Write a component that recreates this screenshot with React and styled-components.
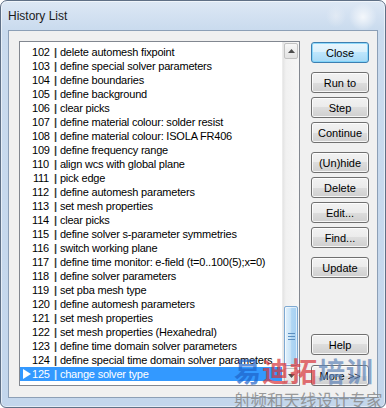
import React from "react";
import styled, { createGlobalStyle } from "styled-components";

const GlobalStyle = createGlobalStyle`
  html, body {
    margin: 0;
    padding: 0;
    background: #ffffff;
  }
  * {
    box-sizing: border-box;
  }
`;

const Window = styled.div`
  position: relative;
  width: 386px;
  height: 408px;
  border: 1px solid #5f7086;
  border-radius: 7px 7px 6px 6px;
  padding: 0 7px 9px 7px;
  display: flex;
  flex-direction: column;
  overflow: hidden;
  background:
    radial-gradient(circle at 362px 16px, rgba(255, 255, 255, 0.75) 0, rgba(255, 255, 255, 0) 14px),
    radial-gradient(ellipse at 335px 15px, rgba(235, 240, 246, 0.6) 0, rgba(235, 240, 246, 0) 10px),
    linear-gradient(#dde8f5 0, #cadbee 28px, #c3d6ec 100%);
  box-shadow: inset 0 0 0 1px rgba(255, 255, 255, 0.55);
`;

const TitleBar = styled.div`
  height: 29px;
  display: flex;
  align-items: center;
  font-family: "Liberation Sans", Arial, sans-serif;
  font-size: 12px;
  color: #1b1b1b;
`;

const Client = styled.div`
  height: 368px;
  border: 1px solid #8c9fb6;
  background: #f0f0f0;
  display: flex;
  gap: 11px;
  padding: 10px 8px 11px 10px;
`;

const ListBox = styled.div`
  width: 281px;
  height: 100%;
  border: 1px solid #828790;
  background: #ffffff;
  display: flex;
`;

const Rows = styled.div`
  flex: 1;
  padding-top: 3px;
  overflow: hidden;
`;

const Row = styled.div`
  height: 14px;
  display: flex;
  align-items: center;
  white-space: nowrap;
  font-family: "Liberation Sans", Arial, sans-serif;
  font-size: 11px;
  letter-spacing: -0.2px;
  color: ${({ $selected }) => ($selected ? "#ffffff" : "#000000")};
  background: ${({ $selected }) => ($selected ? "#3399ff" : "transparent")};
`;

const Marker = styled.span`
  width: 12px;
  height: 14px;
  display: flex;
  align-items: center;
  justify-content: center;
  padding-left: 2px;
`;

const Num = styled.span`
  width: 17px;
  text-align: right;
`;

const Pipe = styled.span`
  margin-left: 5px;
  margin-right: 3px;
  font-weight: 700;
  color: ${({ $selected }) => ($selected ? "#d8ecff" : "#3a3a3a")};
`;

const ScrollBar = styled.div`
  width: 17px;
  display: flex;
  flex-direction: column;
  background: linear-gradient(90deg, #e4e4e4 0, #f1f1f1 3px, #f6f6f6 100%);
  border-left: 1px solid #ececec;
`;

const ArrowButton = styled.div`
  height: 16px;
  margin: 1px;
  border: 1px solid #c2c2c2;
  border-radius: 2px;
  background: linear-gradient(#f7f7f7, #e2e2e2);
  display: flex;
  align-items: center;
  justify-content: center;
`;

const Track = styled.div`
  flex: 1;
  display: flex;
  flex-direction: column;
  justify-content: flex-end;
`;

const Thumb = styled.div`
  height: 60px;
  margin: 0 1px 1px 1px;
  border: 1px solid #7ea9d2;
  border-radius: 2px;
  background: linear-gradient(90deg, #e4f2fc 0, #c9e4f8 45%, #b0d6f4 55%, #a6d0f2 100%);
  box-shadow: inset 0 0 0 1px rgba(255, 255, 255, 0.6);
  display: flex;
  align-items: center;
  justify-content: center;
`;

const Grip = styled.div`
  width: 7px;
  display: flex;
  flex-direction: column;
  gap: 2px;
  span {
    display: block;
    height: 1px;
    background: #5c8fc0;
  }
`;

const ButtonColumn = styled.div`
  width: 58px;
  display: flex;
  flex-direction: column;
  gap: 9px;
  padding-top: 1px;
`;

const ButtonGroup = styled.div`
  display: flex;
  flex-direction: column;
  gap: ${({ $gap }) => $gap ?? 4}px;
  margin-top: ${({ $pushDown }) => ($pushDown ? "auto" : "0")};
`;

const Button = styled.div`
  height: 21px;
  border: 1px solid ${({ $default }) => ($default ? "#3c7fb1" : "#707070")};
  border-radius: 3px;
  display: flex;
  align-items: center;
  justify-content: center;
  font-family: "Liberation Sans", Arial, sans-serif;
  font-size: 11px;
  color: #000000;
  background: ${({ $default }) =>
    $default
      ? "linear-gradient(#eaf6fd 0, #d9f0fc 50%, #bee6fd 50%, #a7d9f5 100%)"
      : "linear-gradient(#f2f2f2 0, #ebebeb 50%, #dddddd 50%, #cfcfcf 100%)"};
  box-shadow: inset 0 0 0 1px
    ${({ $default }) => ($default ? "rgba(120, 210, 250, 0.8)" : "rgba(255, 255, 255, 0.8)")};
`;

// overlay watermark stamped over the bottom-right corner of the capture
const Watermark = styled.div`
  position: absolute;
  left: 233px;
  top: 354px;
  display: flex;
  flex-direction: column;
  pointer-events: none;
  font-family: "Noto Sans CJK SC", sans-serif;
`;

const MarkBig = styled.div`
  display: flex;
  font-size: 27px;
  font-weight: 700;
  line-height: 32px;
  letter-spacing: 1px;
`;

const MarkChar = styled.span`
  color: ${({ $color }) => $color};
  opacity: 0.7;
`;

const MarkSmall = styled.div`
  margin-top: 2px;
  font-size: 16.5px;
  line-height: 22px;
  color: #8a8a8a;
  opacity: 0.85;
  white-space: nowrap;
`;

const history = [
  [102, "delete automesh fixpoint"],
  [103, "define special solver parameters"],
  [104, "define boundaries"],
  [105, "define background"],
  [106, "clear picks"],
  [107, "define material colour: solder resist"],
  [108, "define material colour: ISOLA FR406"],
  [109, "define frequency range"],
  [110, "align wcs with global plane"],
  [111, "pick edge"],
  [112, "define automesh parameters"],
  [113, "set mesh properties"],
  [114, "clear picks"],
  [115, "define solver s-parameter symmetries"],
  [116, "switch working plane"],
  [117, "define time monitor: e-field (t=0..100(5);x=0)"],
  [118, "define solver parameters"],
  [119, "set pba mesh type"],
  [120, "define automesh parameters"],
  [121, "set mesh properties"],
  [122, "set mesh properties (Hexahedral)"],
  [123, "define time domain solver parameters"],
  [124, "define special time domain solver parameters"],
  [125, "change solver type"],
];

const current = 125;

const Arrow = ({ up }) => (
  <svg width="7" height="4" viewBox="0 0 7 4">
    <path d={up ? "M0 4 L3.5 0 L7 4 Z" : "M0 0 L3.5 4 L7 0 Z"} fill="#4d4d4d" />
  </svg>
);

const App = () => {
  return (
    <>
      <GlobalStyle />
      <Window>
        <TitleBar>History List</TitleBar>
        <Client>
          <ListBox>
            <Rows>
              {history.map(([n, text]) => {
                const sel = n === current;
                return (
                  <Row key={n} $selected={sel}>
                    <Marker>
                      {sel && (
                        <svg width="8" height="10" viewBox="0 0 8 10">
                          <path d="M0 0 L8 5 L0 10 Z" fill="#ffffff" />
                        </svg>
                      )}
                    </Marker>
                    <Num>{n}</Num>
                    <Pipe $selected={sel}>|</Pipe>
                    <span>{text}</span>
                  </Row>
                );
              })}
            </Rows>
            <ScrollBar>
              <ArrowButton>
                <Arrow up />
              </ArrowButton>
              <Track>
                <Thumb>
                  <Grip>
                    <span />
                    <span />
                    <span />
                  </Grip>
                </Thumb>
              </Track>
              <ArrowButton>
                <Arrow />
              </ArrowButton>
            </ScrollBar>
          </ListBox>
          <ButtonColumn>
            <ButtonGroup>
              <Button $default>Close</Button>
            </ButtonGroup>
            <ButtonGroup>
              <Button>Run to</Button>
              <Button>Step</Button>
              <Button>Continue</Button>
            </ButtonGroup>
            <ButtonGroup>
              <Button>(Un)hide</Button>
              <Button>Delete</Button>
              <Button>Edit...</Button>
              <Button>Find...</Button>
            </ButtonGroup>
            <ButtonGroup>
              <Button>Update</Button>
            </ButtonGroup>
            <ButtonGroup $pushDown $gap={10}>
              <Button>Help</Button>
              <Button>More &gt;&gt;</Button>
            </ButtonGroup>
          </ButtonColumn>
        </Client>
        <Watermark>
          <MarkBig>
            <MarkChar $color="#1f63c9">易</MarkChar>
            <MarkChar $color="#d8353b">迪</MarkChar>
            <MarkChar $color="#d8353b">拓</MarkChar>
            <MarkChar $color="#5f84b8">培</MarkChar>
            <MarkChar $color="#5f84b8">训</MarkChar>
          </MarkBig>
          <MarkSmall>射频和天线设计专家</MarkSmall>
        </Watermark>
      </Window>
    </>
  );
};

export default App;
